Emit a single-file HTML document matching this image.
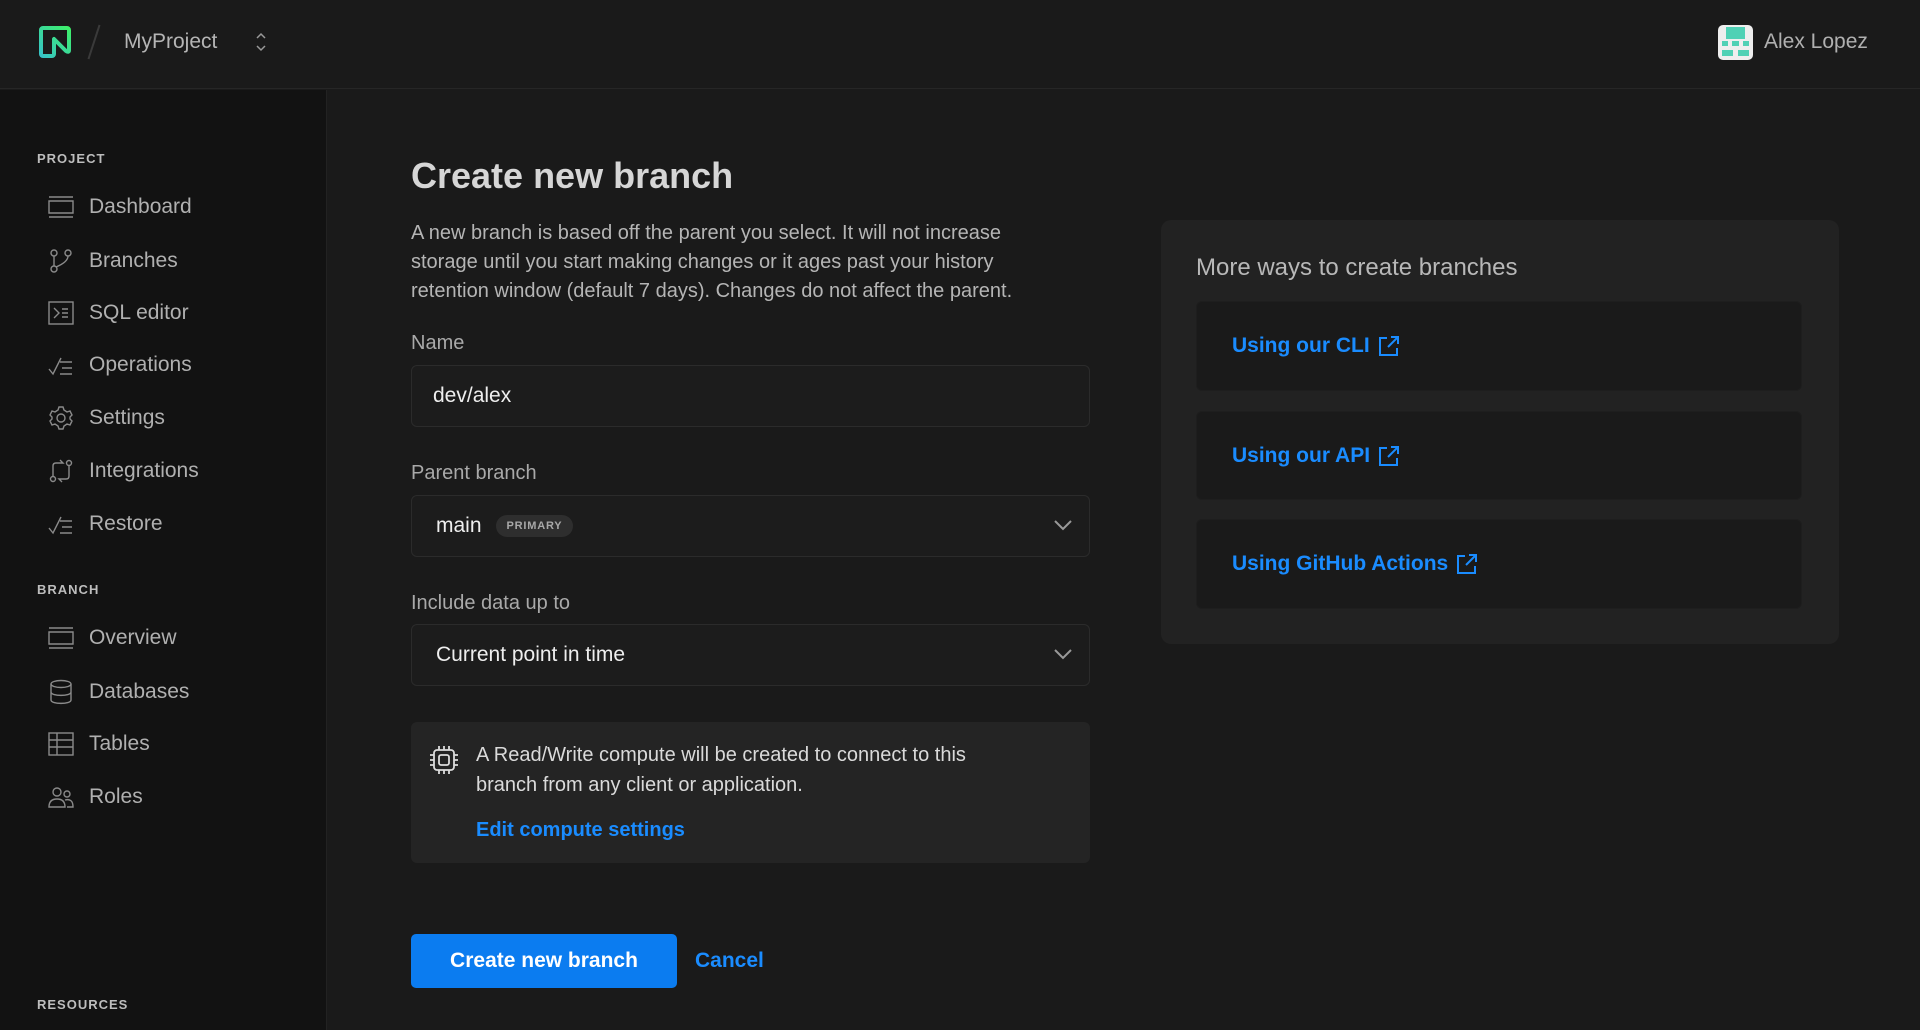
<!DOCTYPE html>
<html><head><meta charset="utf-8"><style>
*{box-sizing:border-box;margin:0;padding:0}
body{width:1920px;height:1030px;background:#1a1a1a;font-family:"Liberation Sans",sans-serif;color:#e4e4e4;position:relative;overflow:hidden}
.hdr{position:absolute;left:0;top:0;width:1920px;height:89px;background:#1a1a1a;border-bottom:1px solid #262626}
.side{position:absolute;left:0;top:90px;width:327px;height:940px;background:#121212;border-right:1px solid #222}
.abs{position:absolute}
.sec{position:absolute;left:37px;font-size:13px;font-weight:bold;letter-spacing:1px;color:#bdbdbd}
.nav{position:absolute;left:48px;height:30px;display:flex;align-items:center;font-size:21px;color:#b0b0b0}
.nav svg{width:26px;height:26px;margin-right:15px;fill:none;stroke:#8a8a8a;stroke-width:1.4}
.lbl{position:absolute;left:411px;font-size:20px;color:#a9a9a9}
.inp{position:absolute;left:411px;width:679px;height:62px;background:#1c1c1c;border:1px solid #2b2b2b;border-radius:6px;font-size:21px;color:#eee;display:flex;align-items:center}
.chev{position:absolute;right:16px;top:22px}
.card{position:absolute;left:1196px;width:606px;background:#1a1a1a;border-radius:6px;border:1px solid #1e1e1e;display:flex;align-items:center;padding-left:35px;font-size:21px;color:#1a8cff;font-weight:bold}
.card svg{margin-left:8px}
</style></head><body>
<div class="hdr">
 <svg class="abs" style="left:37px;top:24px" width="36" height="36" viewBox="0 0 36 36"><defs><linearGradient id="g" x1="0" y1="1" x2="1" y2="0"><stop offset="0" stop-color="#37c3c7"/><stop offset="1" stop-color="#3ef06a"/></linearGradient></defs><path d="M8 32H6a2 2 0 0 1-2-2V6a2 2 0 0 1 2-2h24a2 2 0 0 1 2 2v20q0 3-3 1L17 15v15a2 2 0 0 1-2 2z" fill="none" stroke="url(#g)" stroke-width="4" stroke-linejoin="round"/></svg>
 <div class="abs" style="left:93px;top:24px;width:2px;height:36px;background:#3a3a3a;transform:rotate(18deg)"></div>
 <div class="abs" style="left:124px;top:30px;font-size:21px;color:#b5b5b5">MyProject</div>
 <svg class="abs" style="left:254px;top:31px" width="14" height="22" viewBox="0 0 14 22" fill="none" stroke="#999" stroke-width="1.5"><path d="M3 7l4-4 4 4M3 15l4 4 4-4"/></svg>
 <div class="abs" style="left:1718px;top:25px;width:35px;height:35px;background:#eee;border-radius:5px;overflow:hidden"><div class="abs" style="left:8px;top:2px;width:19px;height:12px;background:#4fd1b5"></div><div class="abs" style="left:4px;top:16px;width:6px;height:5px;background:#4fd1b5"></div><div class="abs" style="left:14px;top:16px;width:7px;height:5px;background:#4fd1b5"></div><div class="abs" style="left:25px;top:16px;width:6px;height:5px;background:#4fd1b5"></div><div class="abs" style="left:4px;top:25px;width:11px;height:6px;background:#4fd1b5"></div><div class="abs" style="left:20px;top:25px;width:11px;height:6px;background:#4fd1b5"></div></div>
 <div class="abs" style="left:1764px;top:30px;font-size:21px;color:#b0b0b0">Alex Lopez</div>
</div>
<div class="side">
 <div class="sec" style="top:61px">PROJECT</div>
 <div class="nav" style="top:102px"><svg viewBox="0 0 26 26"><path d="M1 3h24M1 23h24M1 7h24v12H1z"/></svg>Dashboard</div>
 <div class="nav" style="top:156px"><svg viewBox="0 0 26 26"><circle cx="6" cy="5" r="3"/><circle cx="20" cy="5" r="3"/><circle cx="6" cy="21" r="3"/><path d="M6 8v10M20 8q0 6-12 11"/></svg>Branches</div>
 <div class="nav" style="top:208px"><svg viewBox="0 0 26 26"><rect x="1" y="2" width="24" height="22"/><path d="M6 8l5 5-5 5M14 9h6M14 13h6M14 17h6"/></svg>SQL editor</div>
 <div class="nav" style="top:260px"><svg viewBox="0 0 26 26"><path d="M1 17l4 5 8-16M12 10h12M14 16h10M12 22h12"/></svg>Operations</div>
 <div class="nav" style="top:313px"><svg viewBox="0 0 26 26"><circle cx="13" cy="13" r="4"/><path d="M11 2h4l1 3 3 2 3-1 2 4-2 2v2l2 2-2 4-3-1-3 2-1 3h-4l-1-3-3-2-3 1-2-4 2-2v-2l-2-2 2-4 3 1 3-2z"/></svg>Settings</div>
 <div class="nav" style="top:366px"><svg viewBox="0 0 26 26"><circle cx="5" cy="21" r="2.5"/><circle cx="21" cy="5" r="2.5"/><path d="M5 18V8q0-3 3-3h7l-3-3M21 8v10q0 3-3 3h-7l3 3"/></svg>Integrations</div>
 <div class="nav" style="top:419px"><svg viewBox="0 0 26 26"><path d="M1 17l4 5 8-16M12 10h12M14 16h10M12 22h12"/></svg>Restore</div>
 <div class="sec" style="top:492px">BRANCH</div>
 <div class="nav" style="top:533px"><svg viewBox="0 0 26 26"><path d="M1 3h24M1 23h24M1 7h24v12H1z"/></svg>Overview</div>
 <div class="nav" style="top:587px"><svg viewBox="0 0 26 26"><ellipse cx="13" cy="5" rx="10" ry="3.5"/><path d="M3 5v16c0 4.5 20 4.5 20 0V5M3 13c0 4.5 20 4.5 20 0"/></svg>Databases</div>
 <div class="nav" style="top:639px"><svg viewBox="0 0 26 26"><rect x="1" y="2" width="24" height="22"/><path d="M1 9h24M1 16h24M9 2v22"/></svg>Tables</div>
 <div class="nav" style="top:692px"><svg viewBox="0 0 26 26"><circle cx="9" cy="8" r="4"/><circle cx="19" cy="10" r="3"/><path d="M1 23q0-8 8-8t8 8zM17 16q8-2 8 7h-6"/></svg>Roles</div>
 <div class="sec" style="top:907px">RESOURCES</div>
</div>

<div class="abs" style="left:411px;top:155px;font-size:36px;font-weight:bold;color:#d6d6d6">Create new branch</div>
<div class="abs" style="left:411px;top:219px;width:655px;font-size:20px;line-height:29px;color:#b5b5b5">A new branch is based off the parent you select. It will not increase storage until you start making changes or it ages past your history retention window (default 7 days). Changes do not affect the parent.</div>
<div class="lbl" style="top:332px">Name</div>
<div class="inp" style="top:365px;padding-left:21px">dev/alex</div>
<div class="lbl" style="top:462px">Parent branch</div>
<div class="inp" style="top:495px;padding-left:24px">main<span style="margin-left:14px;background:#2e2e2e;color:#a8a8a8;font-size:11px;font-weight:bold;letter-spacing:.8px;padding:5px 11px;border-radius:12px">PRIMARY</span><svg class="chev" width="20" height="14" viewBox="0 0 20 14" fill="none" stroke="#999" stroke-width="2"><path d="M2 3l8 8 8-8"/></svg></div>
<div class="lbl" style="top:592px">Include data up to</div>
<div class="inp" style="top:624px;padding-left:24px">Current point in time<svg class="chev" width="20" height="14" viewBox="0 0 20 14" fill="none" stroke="#999" stroke-width="2"><path d="M2 3l8 8 8-8"/></svg></div>
<div class="abs" style="left:411px;top:722px;width:679px;height:141px;background:#242424;border-radius:6px"></div>
<svg class="abs" style="left:429px;top:745px" width="30" height="30" viewBox="0 0 30 30" fill="none" stroke="#ddd" stroke-width="1.8"><rect x="5" y="5" width="20" height="20" rx="3"/><rect x="10" y="10" width="10" height="10" rx="2"/><path d="M10 1v4M15 1v4M20 1v4M10 25v4M15 25v4M20 25v4M1 10h4M1 15h4M1 20h4M25 10h4M25 15h4M25 20h4"/></svg>
<div class="abs" style="left:476px;top:740px;width:545px;font-size:20px;line-height:30px;color:#dadada">A Read/Write compute will be created to connect to this branch from any client or application.</div>
<div class="abs" style="left:476px;top:819px;font-size:20px;color:#1a8cff;font-weight:bold">Edit compute settings</div>
<div class="abs" style="left:411px;top:934px;width:266px;height:54px;background:#0b7cf0;border-radius:5px;color:#fff;font-size:21px;font-weight:bold;display:flex;align-items:center;justify-content:center">Create new branch</div>
<div class="abs" style="left:695px;top:949px;font-size:21px;color:#1a8cff;font-weight:bold">Cancel</div>

<div class="abs" style="left:1161px;top:220px;width:678px;height:424px;background:#222;border-radius:10px"></div>
<div class="abs" style="left:1196px;top:254px;font-size:24px;color:#b8b8b8">More ways to create branches</div>
<div class="card" style="top:301px;height:90px">Using our CLI<svg width="22" height="22" viewBox="0 0 22 22" fill="none" stroke="#1a8cff" stroke-width="2"><path d="M9 3H2v17h17v-7M13 2h7v7M20 2L10 12"/></svg></div>
<div class="card" style="top:411px;height:89px">Using our API<svg width="22" height="22" viewBox="0 0 22 22" fill="none" stroke="#1a8cff" stroke-width="2"><path d="M9 3H2v17h17v-7M13 2h7v7M20 2L10 12"/></svg></div>
<div class="card" style="top:519px;height:90px">Using GitHub Actions<svg width="22" height="22" viewBox="0 0 22 22" fill="none" stroke="#1a8cff" stroke-width="2"><path d="M9 3H2v17h17v-7M13 2h7v7M20 2L10 12"/></svg></div>
</body></html>
